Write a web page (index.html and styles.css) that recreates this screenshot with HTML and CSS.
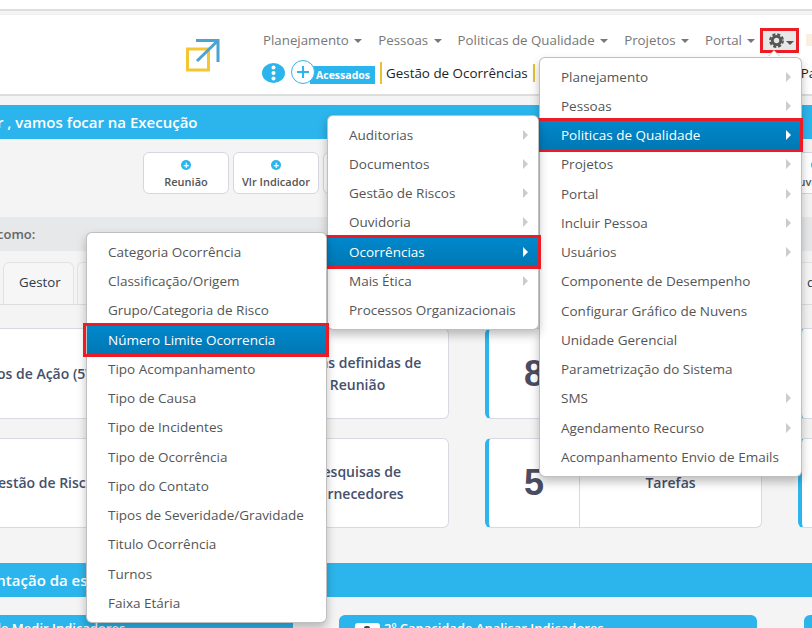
FILE: index.html
```html
<!DOCTYPE html>
<html>
<head>
  <meta charset="UTF-8">
  <title>Gestão de Ocorrências</title>
  <link rel="stylesheet" href="styles.css">
</head>
<body>
  <div class="top-strip"></div>

  <!-- Header with logo and navigation -->
  <header class="header">
    <svg class="logo" width="36" height="36" viewBox="0 0 36 36">
      <rect x="2.5" y="12" width="21" height="21" fill="none" stroke="#f6c534" stroke-width="3"/>
      <path d="M12 24 L33 3.5 M11 3.5 H33 V25" fill="none" stroke="#4aa3d0" stroke-width="3"/>
    </svg>
    <div class="nav">
      <div class="nav-row">
        <a class="nav-item">Planejamento <i class="caret"></i></a>
        <a class="nav-item">Pessoas <i class="caret"></i></a>
        <a class="nav-item">Politicas de Qualidade <i class="caret"></i></a>
        <a class="nav-item">Projetos <i class="caret"></i></a>
        <a class="nav-item">Portal <i class="caret"></i></a>
        <a class="gear-item">
          <svg width="15" height="15" viewBox="0 0 16 16">
            <circle cx="8" cy="8" r="4.4" fill="none" stroke="#555" stroke-width="3"/>
            <circle cx="8" cy="8" r="6.6" fill="none" stroke="#555" stroke-width="2.6" stroke-dasharray="3.2 1.98"/>
          </svg>
          <i class="caret caret-dark"></i>
        </a>
        <span class="nav-next"></span>
      </div>
      <div class="quick-row">
        <svg class="dots-icon" width="23" height="20" viewBox="0 0 23 20">
          <ellipse cx="11.5" cy="10" rx="11.5" ry="10" fill="#2cb5ec"/>
          <circle cx="11.5" cy="4.5" r="2" fill="#fff"/>
          <circle cx="11.5" cy="10" r="2" fill="#fff"/>
          <circle cx="11.5" cy="15.5" r="2" fill="#fff"/>
        </svg>
        <span class="plus-circle">
          <svg width="14" height="14" viewBox="0 0 14 14"><path d="M7 1 V13 M1 7 H13" stroke="#2cb5ec" stroke-width="2"/></svg>
        </span>
        <span class="quick-label">Acessados</span>
        <span class="quick-link">Gestão de Ocorrências</span>
        <span class="quick-gap"></span>
        <span class="quick-link quick-plain">Painel</span>
      </div>
    </div>
  </header>

  <div class="blue-bar bar-first">r , vamos focar na Execução</div>

  <div class="action-row">
    <a class="action-btn"><i class="plus-dot"></i>Reunião</a>
    <a class="action-btn"><i class="plus-dot"></i>Vlr Indicador</a>
    <a class="action-btn"><i class="plus-dot"></i></a>
    <a class="action-btn"><i class="plus-dot"></i></a>
    <a class="action-btn"><i class="plus-dot"></i></a>
    <a class="action-btn"><i class="plus-dot"></i></a>
    <a class="action-btn"><i class="plus-dot"></i></a>
    <a class="action-btn"><i class="plus-dot"></i>Ouvidoria</a>
  </div>

  <div class="gray-band">como:</div>

  <div class="tabs">
    <a class="tab tab-prev"></a>
    <a class="tab tab-gestor">Gestor</a>
    <a class="tab tab-wide"></a>
    <a class="tab">dados</a>
  </div>

  <!-- Indicator cards -->
  <div class="card-row">
    <div class="card"><div class="card-num"></div><div class="card-text">Planos de Ação (5W2H)</div></div>
    <div class="card"><div class="card-num"></div><div class="card-text">Metas definidas de<br>Reunião</div></div>
    <div class="card"><div class="card-num">8</div><div class="card-text"></div></div>
    <div class="card"><div class="card-num"></div><div class="card-text"></div></div>
  </div>
  <div class="card-row">
    <div class="card"><div class="card-num"></div><div class="card-text">Gestão de Riscos</div></div>
    <div class="card"><div class="card-num"></div><div class="card-text">Pesquisas de<br>Fornecedores</div></div>
    <div class="card"><div class="card-num">5</div><div class="card-text">Tarefas</div></div>
    <div class="card"><div class="card-num"></div><div class="card-text"></div></div>
  </div>

  <div class="blue-bar bar-second">Apresentação da estratégia</div>

  <div class="panel-row">
    <div class="panel panel-first">1º Capacidade Medir Indicadores</div>
    <div class="panel panel-second"><i class="panel-icon"></i>2º Capacidade Analisar Indicadores</div>
    <div class="panel panel-third"></div>
  </div>

  <!-- Settings menu -->
  <ul class="menu menu-main">
    <li class="has-sub">Planejamento</li>
    <li class="has-sub">Pessoas</li>
    <li class="has-sub active">Politicas de Qualidade</li>
    <li class="has-sub">Projetos</li>
    <li class="has-sub">Portal</li>
    <li class="has-sub">Incluir Pessoa</li>
    <li class="has-sub">Usuários</li>
    <li>Componente de Desempenho</li>
    <li>Configurar Gráfico de Nuvens</li>
    <li>Unidade Gerencial</li>
    <li>Parametrização do Sistema</li>
    <li class="has-sub">SMS</li>
    <li class="has-sub">Agendamento Recurso</li>
    <li>Acompanhamento Envio de Emails</li>
  </ul>

  <ul class="menu menu-quality">
    <li class="has-sub">Auditorias</li>
    <li class="has-sub">Documentos</li>
    <li class="has-sub">Gestão de Riscos</li>
    <li class="has-sub">Ouvidoria</li>
    <li class="has-sub active">Ocorrências</li>
    <li class="has-sub">Mais Ética</li>
    <li>Processos Organizacionais</li>
  </ul>

  <ul class="menu menu-events">
    <li>Categoria Ocorrência</li>
    <li>Classificação/Origem</li>
    <li>Grupo/Categoria de Risco</li>
    <li class="active">Número Limite Ocorrencia</li>
    <li>Tipo Acompanhamento</li>
    <li>Tipo de Causa</li>
    <li>Tipo de Incidentes</li>
    <li>Tipo de Ocorrência</li>
    <li>Tipo do Contato</li>
    <li>Tipos de Severidade/Gravidade</li>
    <li>Titulo Ocorrência</li>
    <li>Turnos</li>
    <li>Faixa Etária</li>
  </ul>
</body>
</html>
```

FILE: styles.css
```css
* {
  box-sizing: border-box;
}

html, body {
  height: 628px;
  overflow: hidden;
}

body {
  margin: 0;
  background-color: #f4f4f4;
  font-family: "Open Sans", "Liberation Sans", sans-serif;
  font-size: 14px;
  color: #333;
}

.top-strip {
  height: 11px;
  background-color: #fff;
  border-bottom: 2px solid #ddd;
}

/* Header */
.header {
  display: flex;
  height: 82px;
  margin-top: 3px;
  background-color: #fff;
  border-top: 1px solid #eee;
  border-bottom: 2px solid #ddd;
}

.logo {
  flex: none;
  margin: 22px 0 0 185px;
}

.nav {
  margin-left: 42px;
  padding-top: 12px;
}

.nav-row {
  display: flex;
  align-items: center;
  height: 26px;
  color: #777;
  font-size: 13.3px;
  white-space: nowrap;
}

.nav-item {
  margin-right: 16px;
}

.nav-item:nth-child(5) {
  margin-right: 5px;
}

.caret {
  display: inline-block;
  width: 0;
  height: 0;
  margin-left: 2px;
  vertical-align: middle;
  border-top: 4px solid #777;
  border-left: 4px solid transparent;
  border-right: 4px solid transparent;
}

.caret-dark {
  border-top-color: #555;
  margin-top: 6px;
}

.gear-item {
  display: flex;
  align-items: center;
  width: 39px;
  height: 25px;
  padding-left: 6px;
  background-color: #e7e7e7;
  border: 3px solid #ed1c24;
}

.nav-next {
  width: 10px;
  height: 12px;
  margin-left: 7px;
  background-color: #fbf0df;
}

.quick-row {
  display: flex;
  align-items: center;
  height: 28px;
  margin-top: 6px;
  white-space: nowrap;
  color: #222;
  font-size: 13.4px;
}

.dots-icon {
  flex: none;
  margin-left: -1px;
}

.plus-circle {
  position: relative;
  display: flex;
  flex: none;
  align-items: center;
  justify-content: center;
  width: 24px;
  height: 24px;
  margin: -2px -5px 0 6px;
  background-color: #fff;
  border: 1px solid #2cb5ec;
  border-radius: 50%;
}

.quick-label {
  height: 18px;
  width: 65px;
  margin-top: 4px;
  padding-left: 6px;
  background-color: #2cb5ec;
  color: #fff;
  font-size: 10.5px;
  font-weight: 700;
  line-height: 19px;
}

.quick-link {
  margin-left: 5px;
  padding-left: 4px;
  border-left: 2px solid #e8c030;
  line-height: 22px;
}

.quick-gap {
  flex: none;
  width: 262px;
  margin-left: 5px;
  height: 18px;
  border-left: 2px solid #e8c030;
}

.quick-plain {
  margin-left: 6px;
  padding-left: 0;
  border-left: none;
}

/* Blue section bars */
.blue-bar {
  height: 34px;
  background-color: #2cb5ec;
  color: #fff;
  font-size: 15px;
  font-weight: 600;
  line-height: 35px;
  white-space: nowrap;
}

.bar-first {
  margin-top: 9px;
  text-indent: -3px;
}

.bar-second {
  margin-top: 35px;
  text-indent: -54px;
}

/* Shortcut buttons */
.action-row {
  display: flex;
  gap: 4px;
  margin: 13px 0 0 143px;
}

.action-btn {
  display: flex;
  flex: none;
  flex-direction: column;
  align-items: center;
  width: 86px;
  height: 42px;
  padding-top: 7px;
  background-color: #fff;
  border: 1px solid #d5d7e0;
  border-radius: 6px;
  color: #555;
  font-size: 11px;
  font-weight: 600;
  line-height: 16px;
}

.plus-dot {
  position: relative;
  display: block;
  width: 10px;
  height: 10px;
  margin-bottom: 4px;
  background-color: #2cb5ec;
  border-radius: 50%;
}

.plus-dot::after {
  content: "+";
  position: absolute;
  left: 0;
  top: -3px;
  width: 10px;
  color: #fff;
  font-size: 10px;
  font-weight: 700;
  font-style: normal;
  text-align: center;
}

.gray-band {
  height: 34px;
  margin-top: 23px;
  background-color: #e6e8ea;
  color: #666;
  font-size: 13px;
  font-weight: 600;
  line-height: 34px;
  text-indent: -3px;
}

/* Tabs */
.tabs {
  display: flex;
  gap: 3px;
  height: 43px;
  margin: 11px 0 0 -70px;
  border-bottom: 1px solid #ddd;
}

.tab {
  flex: none;
  padding: 0 15px;
  background-color: #f6f6f6;
  border: 1px solid #e2e2e2;
  border-bottom: none;
  border-radius: 6px 6px 0 0;
  color: #2c3a4a;
  font-size: 13.3px;
  line-height: 38px;
}

.tab-prev {
  width: 70px;
}

.tab-gestor {
  width: 71px;
}

.tab-wide {
  width: 711px;
}

/* Cards */
.card-row {
  display: flex;
  gap: 36px;
  margin: 23px 0 0 -141px;
}

.card-row + .card-row {
  margin-top: 19px;
}

.card {
  display: flex;
  flex: none;
  width: 277px;
  height: 90.5px;
  background-color: #fff;
  border: 1px solid #d8d9e4;
  border-left: 4px solid #2cb5ec;
  border-radius: 6px;
}

.card-num {
  flex: none;
  display: flex;
  align-items: center;
  justify-content: center;
  width: 91px;
  padding-top: 1px;
  border-right: 1px solid #d8d9e4;
  color: #4c4c60;
  font-family: "Liberation Sans", Arial, sans-serif;
  font-size: 36px;
  font-weight: 700;
}

.card-text {
  flex: 1;
  align-self: center;
  padding-top: 1px;
  color: #45506c;
  font-weight: 600;
  line-height: 22px;
  text-align: center;
  white-space: nowrap;
}

/* Bottom panels */
.panel-row {
  display: flex;
  margin-top: 18px;
  white-space: nowrap;
}

.panel {
  flex: none;
  height: 40px;
  padding-top: 3px;
  background-color: #2cb5ec;
  border-radius: 6px 6px 0 0;
  color: #fff;
  font-size: 13px;
  font-weight: 600;
  line-height: 20px;
}

.panel-first {
  width: 293px;
  text-indent: -80px;
  border-radius: 0 6px 0 0;
}

.panel-second {
  display: flex;
  width: 418px;
  margin-left: 46px;
  padding-left: 16px;
}

.panel-third {
  width: 60px;
  margin-left: 47px;
}

.panel-icon {
  position: relative;
  width: 25px;
  height: 20px;
  margin: 5px 4px 0 0;
  background-color: #fff;
  border-radius: 3px;
}

.panel-icon::after {
  content: "";
  position: absolute;
  left: 9px;
  top: 3px;
  width: 6px;
  height: 8px;
  background-color: #444;
  border-radius: 2px;
}

/* Dropdown menus, these lie over the page */
.menu {
  position: absolute;
  margin: 0;
  padding: 5px 0 4px;
  list-style: none;
  background-color: #fff;
  border: 1px solid rgba(0, 0, 0, 0.25);
  border-radius: 6px;
  box-shadow: 0 5px 10px rgba(0, 0, 0, 0.25);
  color: #555;
  font-size: 13.5px;
  white-space: nowrap;
}

.menu li {
  position: relative;
  height: 29.25px;
  padding-left: 21px;
  line-height: 28px;
}

.menu-main {
  left: 539px;
  top: 56.55px;
  width: 263px;
}

.menu-main::before {
  content: "";
  position: absolute;
  right: 21px;
  top: -7px;
  border-bottom: 6px solid #fff;
  border-left: 6px solid transparent;
  border-right: 6px solid transparent;
  filter: drop-shadow(0 -1px 0 #ccc);
}

.menu-quality {
  left: 327px;
  top: 114.55px;
  width: 212px;
}

.menu-events {
  left: 86px;
  top: 231.78px;
  width: 241px;
}

/* Arrow of an item with a submenu */
.has-sub::after {
  content: "";
  position: absolute;
  right: 10px;
  top: 9px;
  border-left: 5px solid #ccc;
  border-top: 5px solid transparent;
  border-bottom: 5px solid transparent;
}

.menu .active {
  background-image: linear-gradient(to bottom, #0088cc, #0077b3);
  color: #fff;
}

.menu .active.has-sub::after {
  border-left-color: #fff;
}

/* Red box marking the path */
.menu .active::before {
  content: "";
  position: absolute;
  top: -3px;
  left: -3px;
  right: -3px;
  bottom: -2px;
  border: 3.5px solid #ed1c24;
}

.menu-main .active::before {
  right: -2px;
}

.menu-events .active::before {
  left: -4.5px;
}
```
